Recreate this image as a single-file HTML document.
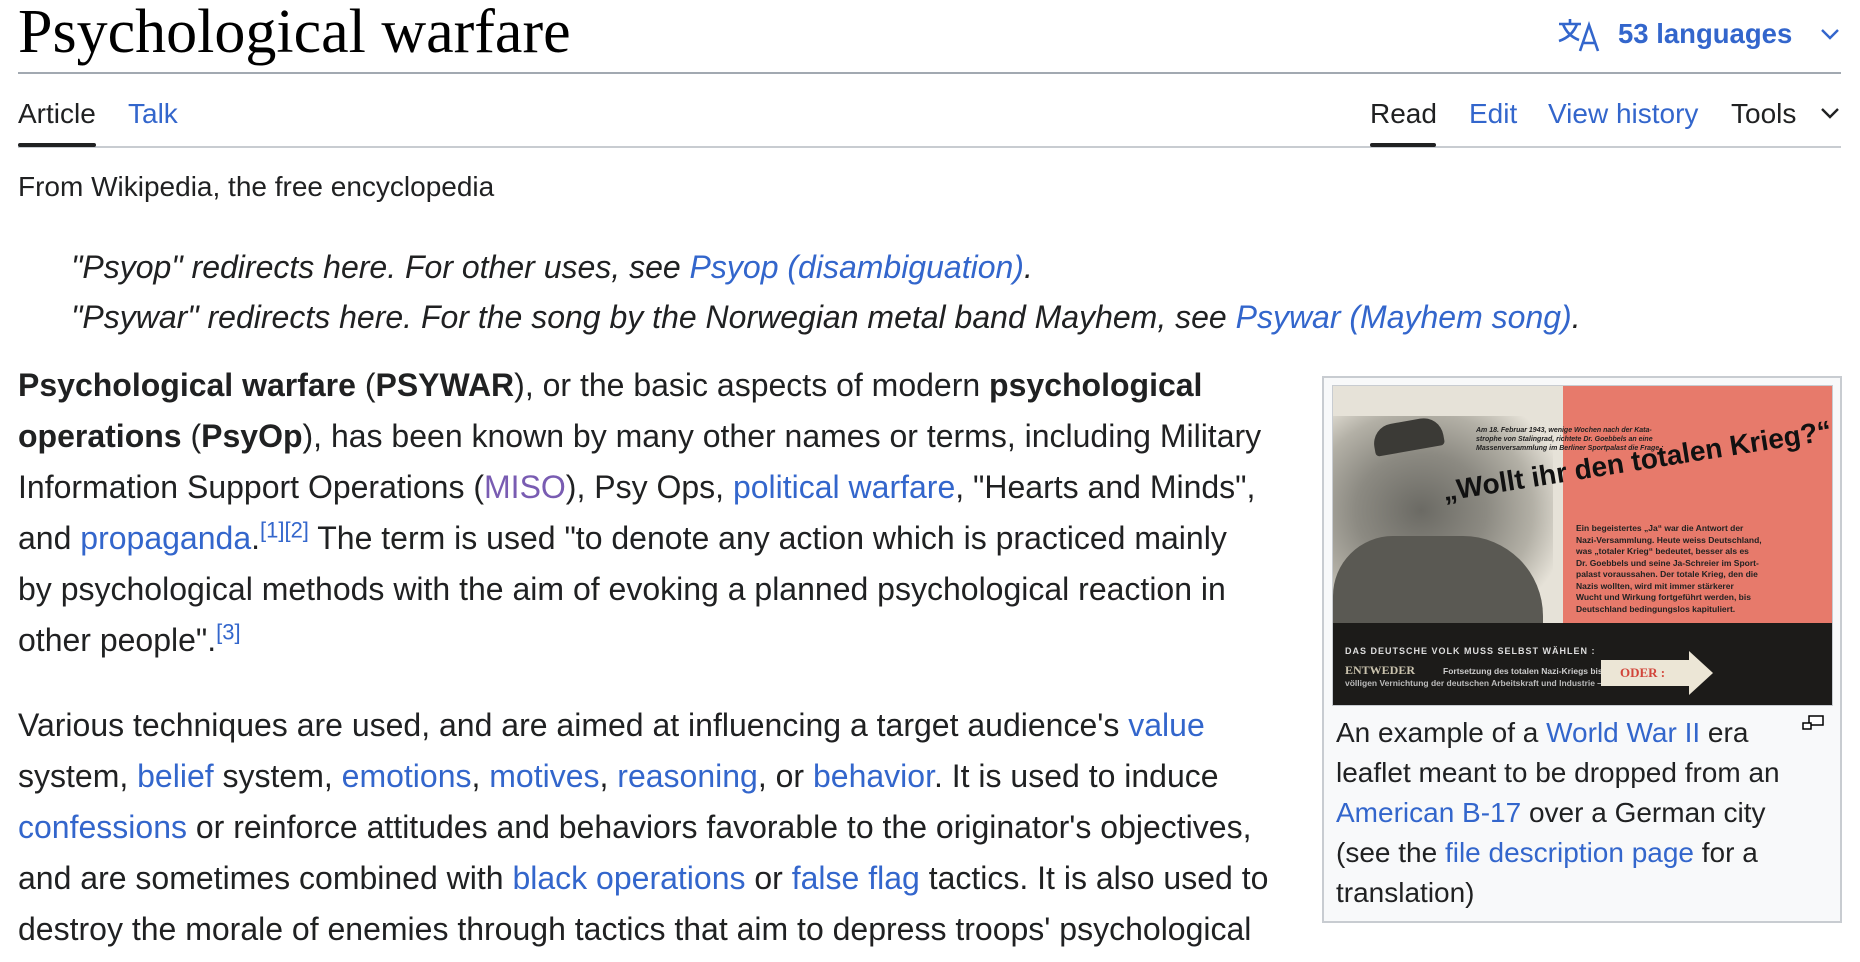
<!DOCTYPE html>
<html style="overflow:hidden;height:962px"><head><meta charset="utf-8"><style>
*{margin:0;padding:0;box-sizing:border-box}
body{width:1860px;height:962px;overflow:hidden;background:#fff;color:#202122;font-family:"Liberation Sans",Arial,sans-serif;position:relative}
.a{position:absolute;white-space:nowrap}
a,.l{color:#3366cc;text-decoration:none}
.v{color:#795cb2}
.title{font-family:"Liberation Serif",serif;font-size:62px;left:18px;top:-4px;line-height:72px;color:#000}
.tab{font-size:28px;line-height:32px;top:98px}
.body{font-size:32px;line-height:51px;left:18px}
.hat{font-size:32px;line-height:50px;left:71px;font-style:italic}
sup{font-size:22px;vertical-align:super;line-height:0}
.cap{font-size:28px;line-height:40px;left:1336px}
</style></head><body>
<div class="a title">Psychological warfare</div>
<div class="a" style="left:18px;top:72px;width:1823px;height:2px;background:#a2a9b1"></div>

<svg class="a" style="left:1558px;top:18px" width="42" height="34" viewBox="0 0 42 34"><g fill="none" stroke="#3366cc" stroke-width="2.6"><path d="M1 6h22M12 1v5M5 6c3 8 8 13 16 16M19 6c-3 8-9 14-18 17"/><path d="M22 33l9-26 9 26M25 25h13"/></g></svg>
<div class="a l" style="left:1618px;top:17px;font-size:27.5px;font-weight:bold;line-height:34px">53 languages</div>
<svg class="a" style="left:1821px;top:28px" width="18" height="12" viewBox="0 0 18 12"><path d="M1 2l8 8 8-8" fill="none" stroke="#3366cc" stroke-width="2.4"/></svg>

<div class="a tab" style="left:18px">Article</div>
<div class="a tab l" style="left:128px">Talk</div>
<div class="a tab" style="left:1370px">Read</div>
<div class="a tab l" style="left:1469px">Edit</div>
<div class="a tab l" style="left:1548px">View history</div>
<div class="a tab" style="left:1731px">Tools</div>
<svg class="a" style="left:1821px;top:107px" width="18" height="12" viewBox="0 0 18 12"><path d="M1 2l8 8 8-8" fill="none" stroke="#202122" stroke-width="2.4"/></svg>
<div class="a" style="left:18px;top:146px;width:1823px;height:2px;background:#c8ccd1"></div>
<div class="a" style="left:18px;top:143px;width:78px;height:4px;background:#202122;border-radius:2px"></div>
<div class="a" style="left:1370px;top:143px;width:66px;height:4px;background:#202122;border-radius:2px"></div>

<div class="a" style="left:18px;top:171px;font-size:28px;line-height:32px">From Wikipedia, the free encyclopedia</div>

<div class="a hat" style="top:242px">"Psyop" redirects here. For other uses, see <a>Psyop (disambiguation)</a>.</div>
<div class="a hat" style="top:292px">"Psywar" redirects here. For the song by the Norwegian metal band Mayhem, see <a>Psywar (Mayhem song)</a>.</div>

<div class="a body" style="top:360px"><b>Psychological warfare</b> (<b>PSYWAR</b>), or the basic aspects of modern <b>psychological</b></div>
<div class="a body" style="top:411px"><b>operations</b> (<b>PsyOp</b>), has been known by many other names or terms, including Military</div>
<div class="a body" style="top:462px">Information Support Operations (<span class="v">MISO</span>), Psy Ops, <a>political warfare</a>, "Hearts and Minds",</div>
<div class="a body" style="top:513px">and <a>propaganda</a>.<sup class="l">[1][2]</sup> The term is used "to denote any action which is practiced mainly</div>
<div class="a body" style="top:564px">by psychological methods with the aim of evoking a planned psychological reaction in</div>
<div class="a body" style="top:615px">other people".<sup class="l">[3]</sup></div>

<div class="a body" style="top:700px">Various techniques are used, and are aimed at influencing a target audience's <a>value</a></div>
<div class="a body" style="top:751px">system, <a>belief</a> system, <a>emotions</a>, <a>motives</a>, <a>reasoning</a>, or <a>behavior</a>. It is used to induce</div>
<div class="a body" style="top:802px"><a>confessions</a> or reinforce attitudes and behaviors favorable to the originator's objectives,</div>
<div class="a body" style="top:853px">and are sometimes combined with <a>black operations</a> or <a>false flag</a> tactics. It is also used to</div>
<div class="a body" style="top:904px">destroy the morale of enemies through tactics that aim to depress troops' psychological</div>
<div class="a body" style="top:955px">states.<sup class="l">[4][5]</sup></div>

<div class="a" style="left:1322px;top:376px;width:520px;height:547px;background:#f8f9fa;border:2px solid #c8ccd1"></div>
<div class="a" style="left:1332px;top:385px;width:501px;height:321px;background:#e6e2d8;overflow:hidden;border:1px solid #c8ccd1">
  <div class="a" style="left:230px;top:0;width:271px;height:237px;background:#e77a6b"></div>
  <div class="a" style="left:0;top:30px;width:220px;height:210px;background:radial-gradient(ellipse at 40% 45%,#6b6a64 0%,#8c8a82 35%,#b3b0a6 60%,rgba(230,226,216,0) 80%)"></div>
  <div class="a" style="left:40px;top:35px;width:70px;height:30px;background:#3b3a36;border-radius:20px 20px 4px 4px;transform:rotate(-10deg)"></div>
  <div class="a" style="left:0;top:150px;width:210px;height:90px;background:#5a5953;border-radius:60px 80px 0 0"></div>
  <div class="a" style="left:110px;top:90px;font:bold 28px 'Liberation Sans',sans-serif;transform:rotate(-9deg);transform-origin:left;color:#111">„Wollt ihr den totalen Krieg?“</div>
  <div class="a" style="left:143px;top:40px;font:italic bold 7px/9px 'Liberation Sans',sans-serif;color:#222">Am 18. Februar 1943, wenige Wochen nach der Kata-<br>strophe von Stalingrad, richtete Dr. Goebbels an eine<br>Massenversammlung im Berliner Sportpalast die Frage :</div>
  <div class="a" style="left:243px;top:137px;font:bold 8.5px/11.5px 'Liberation Sans',sans-serif;color:#222">Ein begeistertes „Ja“ war die Antwort der<br>Nazi-Versammlung. Heute weiss Deutschland,<br>was „totaler Krieg“ bedeutet, besser als es<br>Dr. Goebbels und seine Ja-Schreier im Sport-<br>palast voraussahen. Der totale Krieg, den die<br>Nazis wollten, wird mit immer stärkerer<br>Wucht und Wirkung fortgeführt werden, bis<br>Deutschland bedingungslos kapituliert.</div>
  <div class="a" style="left:0;top:237px;width:501px;height:84px;background:#1c1b19"></div>
  <div class="a" style="left:12px;top:260px;font:bold 9px 'Liberation Sans',sans-serif;color:#ddd;letter-spacing:1px">DAS DEUTSCHE VOLK MUSS SELBST WÄHLEN :</div>
  <div class="a" style="left:12px;top:277px;font:bold 12px 'Liberation Serif',serif;color:#c9c2ad">ENTWEDER</div>
  <div class="a" style="left:110px;top:279px;font:bold 8.5px/12px 'Liberation Sans',sans-serif;color:#ccc">Fortsetzung des totalen Nazi-Kriegs bis zur</div>
  <div class="a" style="left:12px;top:291px;font:bold 8.5px/12px 'Liberation Sans',sans-serif;color:#bbb">völligen Vernichtung der deutschen Arbeitskraft und Industrie —</div>
  <div class="a" style="left:268px;top:274px;width:90px;height:26px;background:#ece6d6"></div>
  <div class="a" style="left:356px;top:265px;width:0;height:0;border-top:22px solid transparent;border-bottom:22px solid transparent;border-left:24px solid #ece6d6"></div>
  <div class="a" style="left:287px;top:279px;font:bold 13px 'Liberation Serif',serif;color:#d2453a">ODER :</div>
</div>
<svg class="a" style="left:1802px;top:715px" width="22" height="16" viewBox="0 0 22 16"><g fill="#fff" stroke="#000" stroke-width="1.5"><rect x="7" y="1" width="14" height="9"/><rect x="1" y="8" width="8" height="6"/></g></svg>
<div class="a cap" style="top:713px">An example of a <a>World War II</a> era</div>
<div class="a cap" style="top:753px">leaflet meant to be dropped from an</div>
<div class="a cap" style="top:793px"><a>American B-17</a> over a German city</div>
<div class="a cap" style="top:833px">(see the <a>file description page</a> for a</div>
<div class="a cap" style="top:873px">translation)</div>
</body></html>
